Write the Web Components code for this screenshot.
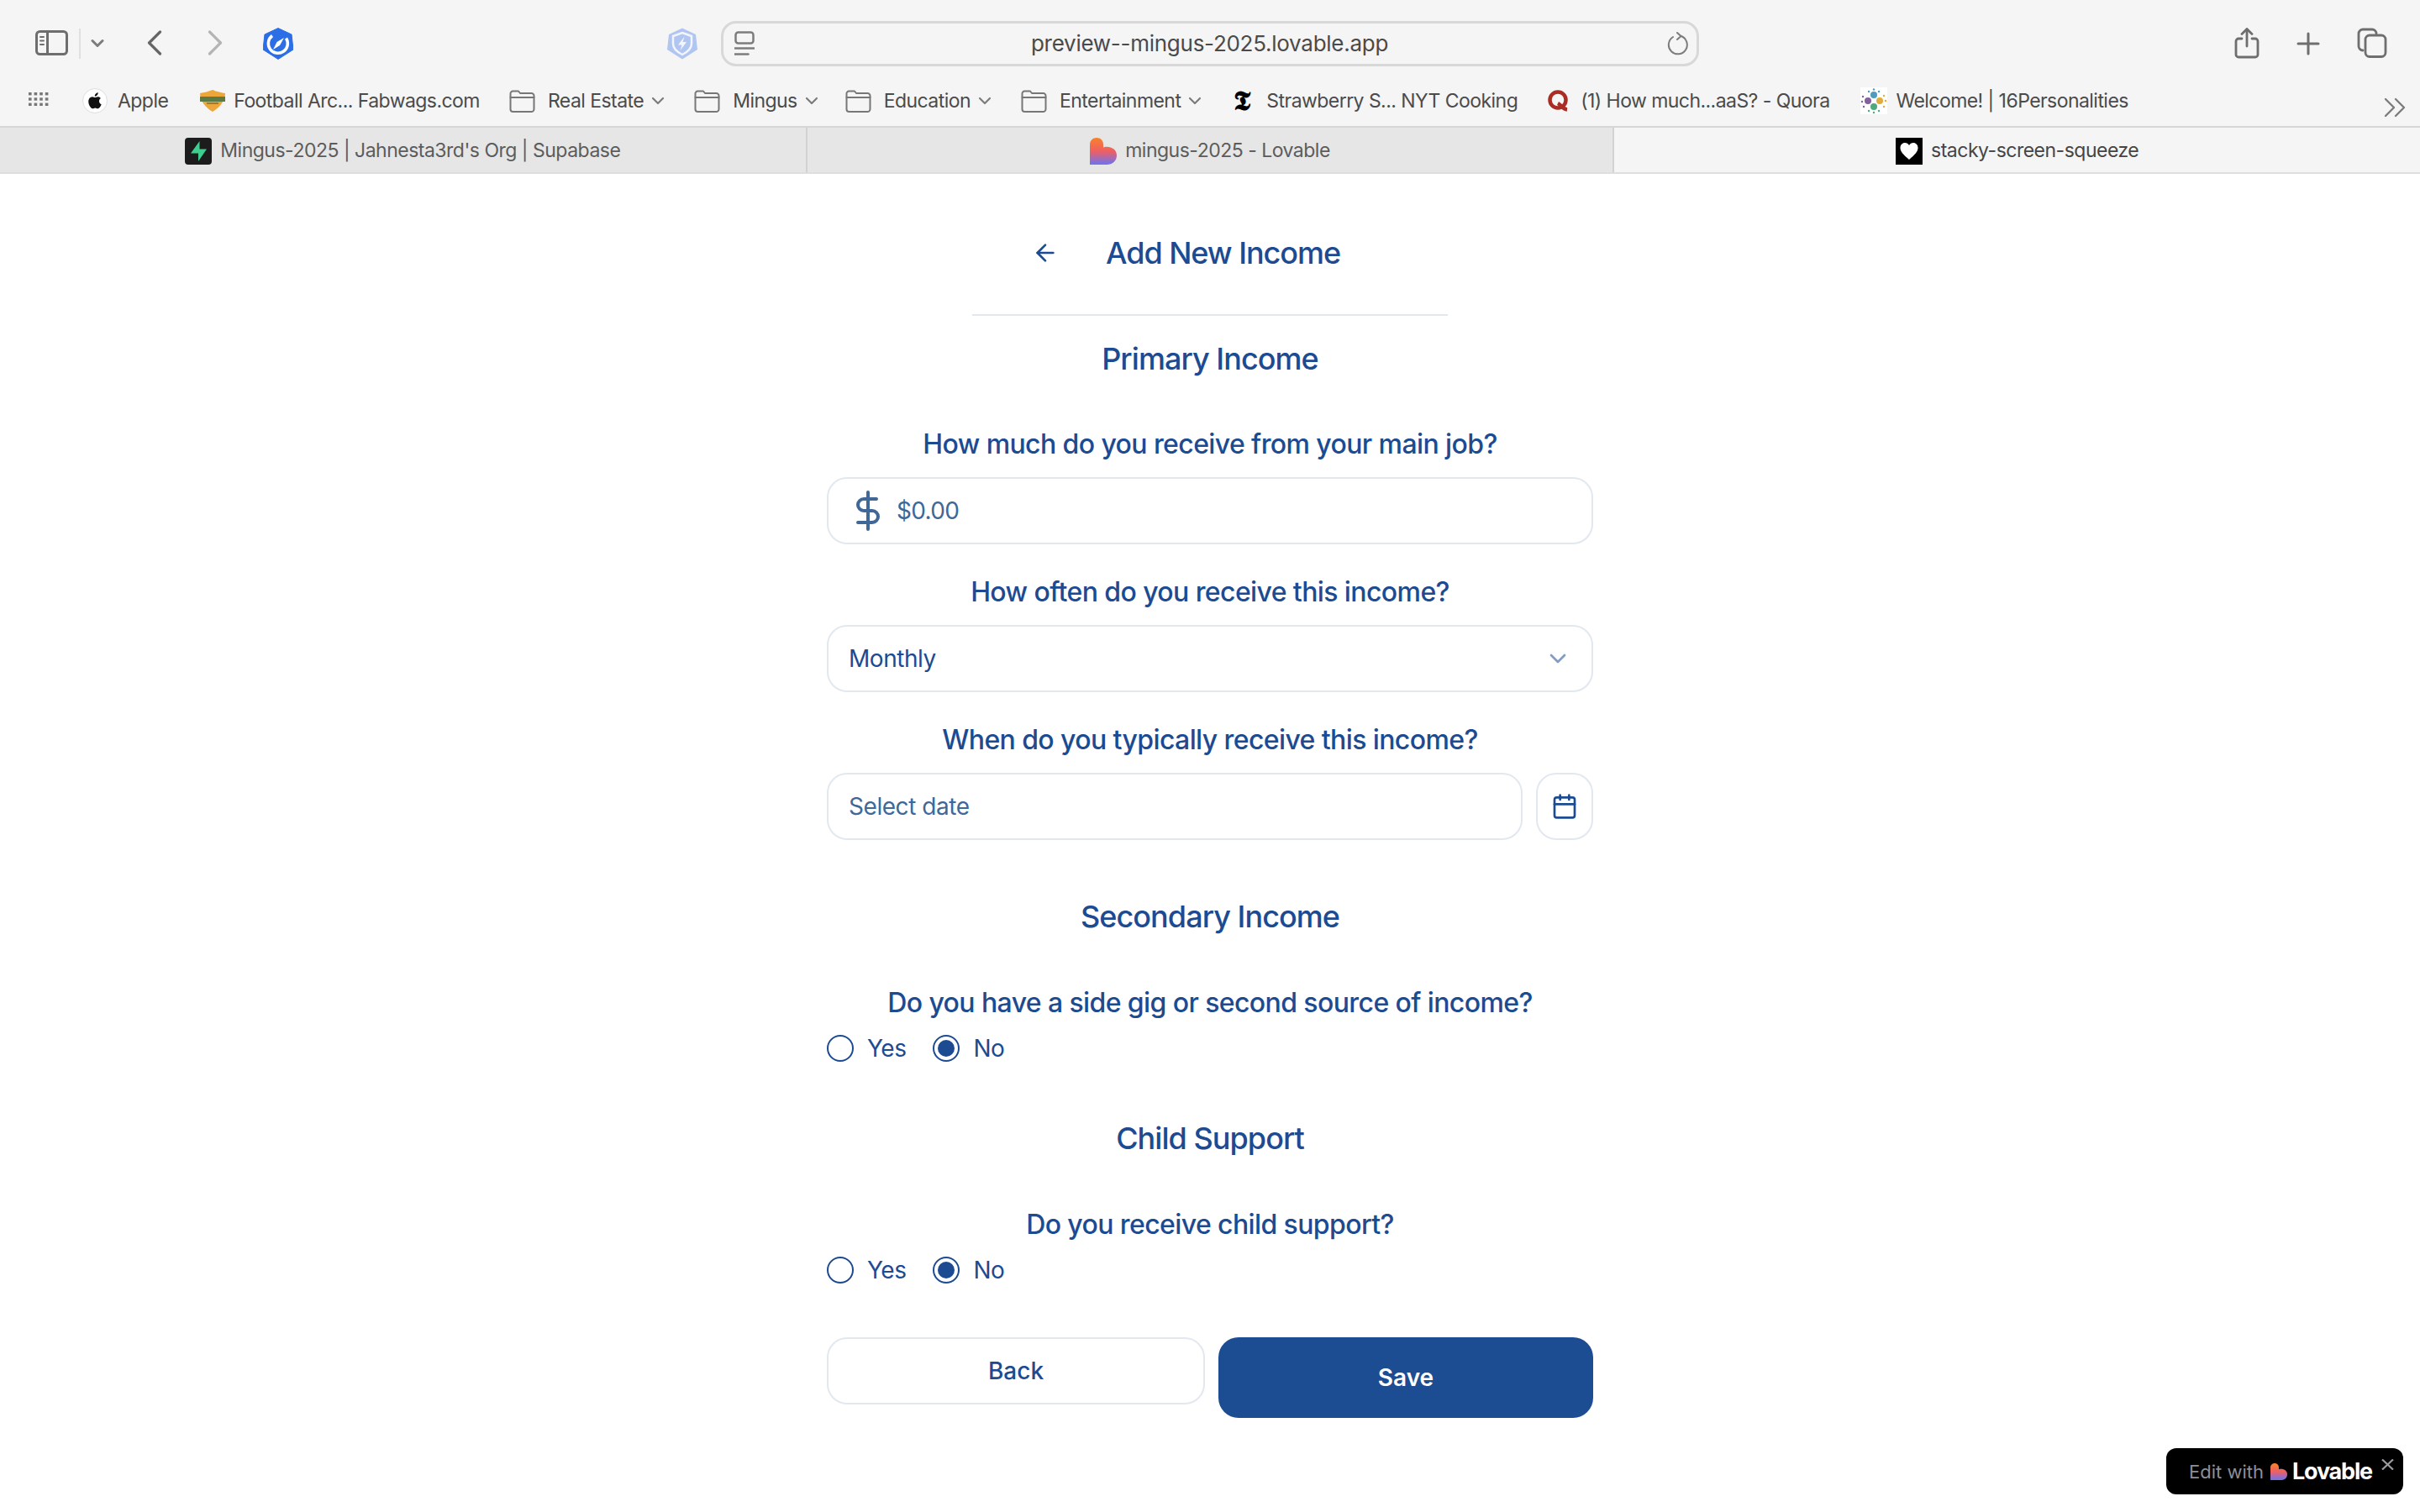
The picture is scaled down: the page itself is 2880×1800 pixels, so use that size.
<!DOCTYPE html>
<html lang="en"><head><meta charset="utf-8"><title>Add New Income</title>
<style>
html,body{margin:0;padding:0;background:#fff;height:1800px;overflow:hidden;font-family:Inter,"Liberation Sans",sans-serif}
</style></head><body>
<browser-chrome></browser-chrome>
<income-form></income-form>
<lovable-badge></lovable-badge>
<script>
const HEART=(id,w,h)=>`<svg width="${w}" height="${h}" viewBox="0 0 32 32"><defs><linearGradient id="${id}" x1="0" y1="0" x2="0" y2="1"><stop offset="0" stop-color="#f9822b"/><stop offset=".5" stop-color="#ee5f63"/><stop offset="1" stop-color="#6a73f5"/></linearGradient></defs><path d="M8 0C13 0 16 3.500 16 8V11.500C17 11 18.500 10.800 20 10.800C27 10.800 32 15 32 21C32 27.500 27 32 20 32H0V8C0 3.500 3.500 0 8 0Z" fill="url(#${id})"/></svg>`;
function def(name,html){
  customElements.define(name,class extends HTMLElement{
    constructor(){super();const r=this.attachShadow({mode:'open'});r.innerHTML=typeof html==='function'?html(this):html;}
  });
}
const ic='fill="none" stroke-linecap="round" stroke-linejoin="round"';
const HEX='M18 0.500L34 8L36 26L18 37.500L0 26L2 8Z';

def('browser-toolbar',`<style>
:host{display:flex;height:102px;background:#f5f5f5;align-items:flex-start;box-sizing:border-box}
svg{display:block;flex:none}
.url{width:1164px;height:54px;margin:25px 0 0 28px;box-sizing:border-box;border:3px solid #d8d8d8;border-radius:18px;display:flex;align-items:center;flex:none;padding:0 9px 0 13px}
.url span{flex:1;text-align:center;font:400 26px/1 Inter,"Liberation Sans",sans-serif;color:#4a4a4a;letter-spacing:-.27px;padding-right:3px}
</style>
<svg style="margin:36px 0 0 42px" width="39" height="30" viewBox="0 0 39 30" ${ic} stroke="#6e6e6e" stroke-width="3"><rect x="1.500" y="1.500" width="36" height="27" rx="4"/><path d="M14.500 2v26"/><path d="M6 8h4M6 12.500h4M6 17h4" stroke-width="2"/></svg>
<svg style="margin:34px 0 0 13px" width="3" height="36"><rect width="2" height="36" fill="#e0e0e0"/></svg>
<svg style="margin:46px 0 0 11px" width="16" height="12" viewBox="0 0 16 12" ${ic} stroke="#7c7c7c" stroke-width="3"><path d="M2 2.500l6 6 6-6"/></svg>
<svg style="margin:36px 0 0 51px" width="18" height="30" viewBox="0 0 18 30" ${ic} stroke="#666" stroke-width="3.200"><path d="M15.500 2L2.500 15l13 13"/></svg>
<svg style="margin:36px 0 0 54px" width="18" height="30" viewBox="0 0 18 30" ${ic} stroke="#b4b4b4" stroke-width="3.200"><path d="M2.500 2l13 13-13 13"/></svg>
<svg style="margin:33px 0 0 48px" width="36" height="38" viewBox="0 0 36 38"><path d="${HEX}" fill="#2b6ee6" stroke="#2b6ee6" stroke-linejoin="round"/><path d="M27.500 12.500A11.500 11.500 0 1 1 11 9.500" fill="none" stroke="#fff" stroke-width="3.500"/><path d="M25 12L20 21L12 26L16.500 17Z" fill="#fff"/></svg>
<svg style="margin:33px 0 0 445px" width="36" height="38" viewBox="0 0 36 38"><path d="${HEX}" fill="#b1c5f1"/><path d="M18 6L29 10V19C29 25 24 29 18 32C12 29 7 25 7 19V10Z" fill="none" stroke="#f2f5fc" stroke-width="2.500"/><path d="M20.500 10.500L13 20.500H17.500L15.500 27L23 17H18.500Z" fill="#f2f5fc"/></svg>
<div class="url">
<svg width="24" height="30" viewBox="0 0 24 30" ${ic} stroke="#7c7c7c" stroke-width="2.500"><rect x="1.500" y="1.500" width="21" height="13" rx="3"/><path d="M0.500 20.500h23"/><path d="M0.500 27.500h16" /></svg>
<span>preview--mingus-2025.lovable.app</span>
<svg width="26" height="28" viewBox="0 0 26 28" ${ic} stroke="#7c7c7c" stroke-width="2"><path d="M16 4.800A11 11 0 1 1 7 6"/><path d="M12 1l4.500 4-4.500 4"/></svg>
</div>
<svg style="margin:33px 0 0 637px" width="30" height="37" viewBox="0 0 30 37" ${ic} stroke="#6e6e6e" stroke-width="2.800"><path d="M9 13H5a3 3 0 0 0-3 3v16a3 3 0 0 0 3 3h20a3 3 0 0 0 3-3V16a3 3 0 0 0-3-3h-4"/><path d="M15 22V2"/><path d="M9 7.500L15 1.500l6 6"/></svg>
<svg style="margin:38px 0 0 44px" width="28" height="28" viewBox="0 0 28 28" ${ic} stroke="#6e6e6e" stroke-width="3"><path d="M14 2v24M2 14h24"/></svg>
<svg style="margin:33px 0 0 44px" width="36" height="36" viewBox="0 0 36 36" ${ic} stroke="#6e6e6e" stroke-width="2.800"><path d="M7 27a5 5 0 0 1-5-5V7a5 5 0 0 1 5-5h11a5 5 0 0 1 5 5"/><rect x="10" y="9" width="24" height="25.500" rx="5"/></svg>
`);

def('book-mark',h=>`<style>
:host{display:inline-flex;align-items:center;height:30px;flex:none;font:400 23px/30px Inter,"Liberation Sans",sans-serif;color:#4b4b4b;letter-spacing:-.55px;white-space:nowrap;margin-right:35px}
.s{display:flex;width:${h.getAttribute('iw')||30}px;justify-content:center;margin-right:${h.getAttribute('g')||12}px}
.c{margin-left:9px}
</style><span class="s"><slot name="icon"></slot></span><slot></slot>${h.hasAttribute('menu')?`<svg class="c" width="16" height="10" viewBox="0 0 16 10" ${ic} stroke="#7c7c7c" stroke-width="2.200"><path d="M2 2l6 6 6-6"/></svg>`:''}`);

const folder=`<svg slot="icon" width="31" height="27" viewBox="0 0 31 27" ${ic} stroke="#777" stroke-width="2"><path d="M1.500 5V23a3 3 0 0 0 3 3h22a3 3 0 0 0 3-3V7a3 3 0 0 0-3-3H13L11 1.500H4.500a3 3 0 0 0-3 3.500Z"/><path d="M1.500 9h28"/></svg>`;

def('bookmark-bar',`<style>
:host{display:flex;height:48px;background:#f5f5f5;align-items:flex-start;position:relative;box-sizing:border-box;padding-left:34px}
.grid{flex:none;margin:8px 40px 0 0}
.more{margin:14px 0 0 auto;margin-right:17px;flex:none}
.row{display:flex;align-items:center;height:30px;margin-top:3px}
</style>
<svg class="grid" width="24" height="16" viewBox="0 0 24 16" fill="#777">
${[0,1,2].map(r=>[0,1,2,3].map(c=>`<rect x="${c*6.600}" y="${r*6.300}" width="3.600" height="3.400"/>`).join('')).join('')}</svg>
<div class="row">
<book-mark g="12" style="margin-right:38px"><svg slot="icon" width="30" height="30" viewBox="0 0 30 30"><circle cx="15" cy="15" r="14.500" fill="#fff" stroke="#ddd"/><g transform="translate(15 15) scale(1.150) translate(-15 -15.500)"><path d="M19.300 15.800c0-2 1.600-3 1.700-3-1-1.300-2.400-1.500-2.900-1.500-1.200-.1-2.400.7-3 .7s-1.600-.7-2.700-.7c-1.400 0-2.700.8-3.400 2-1.500 2.500-.4 6.200 1 8.200.7 1 1.500 2.100 2.600 2 1 0 1.400-.7 2.700-.7s1.600.7 2.700.7 1.800-1 2.500-2c.8-1.100 1.100-2.200 1.100-2.300-.1 0-2.300-.8-2.300-3.400zM17.300 9.700c.6-.7 1-1.700.9-2.700-.9 0-1.900.6-2.500 1.300-.5.600-1 1.600-.9 2.600 1 .1 2-.5 2.500-1.200z" fill="#111"/></g></svg>Apple</book-mark>
<book-mark g="10"><svg slot="icon" width="30" height="26" viewBox="0 0 30 26"><path d="M0 4C5 3 10 2 15 0C20 2 25 3 30 4C30 12 24 21 15 26C6 21 0 12 0 4Z" fill="#eda63a"/><rect x="0" y="8" width="30" height="6" fill="#5d7a44"/><rect x="8" y="15" width="14" height="2" fill="#9b7a34"/></svg>Football Arc... Fabwags.com</book-mark>
<book-mark menu g="15" iw="31">${folder}Real Estate</book-mark>
<book-mark menu g="15" iw="31" style="margin-right:32px">${folder}Mingus</book-mark>
<book-mark menu g="15" iw="31">${folder}Education</book-mark>
<book-mark menu g="15" iw="31" style="margin-right:36px">${folder}Entertainment</book-mark>
<book-mark g="19" iw="22" style="margin-right:36px"><span slot="icon" style="font:700 33px/30px 'DejaVu Serif',serif;color:#000">𝕿</span>Strawberry S... NYT Cooking</book-mark>
<book-mark g="15" iw="24" style="margin-right:36px"><svg slot="icon" width="24" height="26" viewBox="0 0 24 26" fill="none" stroke="#a92d23" stroke-width="4.500"><ellipse cx="12" cy="12" rx="9.500" ry="9.500"/><path d="M12 16C16 18 18 23 23 23.500"/></svg>(1) How much...aaS? - Quora</book-mark>
<book-mark g="11" iw="32"><svg slot="icon" width="32" height="32" viewBox="0 0 32 32"><rect width="32" height="32" fill="#fff"/><circle cx="16" cy="9" r="4" fill="#4f9bbf"/><circle cx="9" cy="16" r="4" fill="#85609f"/><circle cx="23" cy="16" r="4" fill="#e0ad3c"/><circle cx="16" cy="23" r="4" fill="#4fa97c"/><g fill="#4f9bbf"><circle cx="10" cy="5" r="1.200"/><circle cx="16" cy="2.500" r="1.200"/><circle cx="22" cy="5" r="1.200"/></g><g fill="#85609f"><circle cx="3" cy="11" r="1.200"/><circle cx="2" cy="17" r="1.200"/><circle cx="4" cy="23" r="1.200"/></g><g fill="#e0ad3c"><circle cx="28" cy="10" r="1.200"/><circle cx="30" cy="16" r="1.200"/><circle cx="28" cy="23" r="1.200"/></g><g fill="#4fa97c"><circle cx="10" cy="28" r="1.200"/><circle cx="16" cy="30" r="1.200"/><circle cx="22" cy="28" r="1.200"/></g></svg>Welcome! | 16Personalities</book-mark>
</div>
<svg class="more" width="26" height="24" viewBox="0 0 26 24" ${ic} stroke="#7c7c7c" stroke-width="2.400"><path d="M2 2l10 10L2 22M14 2l10 10-10 10"/></svg>
`);

def('tab-item',h=>`<style>
:host{flex:1;display:flex;align-items:center;justify-content:center;gap:10px;padding-top:2px;background:${h.hasAttribute('active')?'#f5f5f5':'#e6e6e6'};border-right:${h.hasAttribute('last')?'0':'2px solid #d2d2d2'};font:400 23px/1 Inter,"Liberation Sans",sans-serif;color:${h.hasAttribute('active')?'#454545':'#5c5c5c'};letter-spacing:-.5px;white-space:nowrap;box-sizing:border-box;min-width:0}
</style><slot name="icon"></slot><slot></slot>`);

def('tab-strip',`<style>:host{display:flex;height:57px;border-top:2px solid #d6d6d6;border-bottom:2px solid #dedede;box-sizing:border-box}</style>
<tab-item><svg slot="icon" width="32" height="32" viewBox="0 0 32 32"><rect width="32" height="32" rx="4" fill="#1c1c1c"/><path d="M17.500 4L7 18.500H16V28L26 13.500H17.500Z" fill="#3ecf8e"/></svg>Mingus-2025 | Jahnesta3rd's Org | Supabase</tab-item>
<tab-item><span slot="icon" style="display:flex">${HEART('h1',32,32)}</span>mingus-2025 - Lovable</tab-item>
<tab-item active last><svg slot="icon" width="32" height="32" viewBox="0 0 32 32"><rect width="32" height="32" fill="#000"/><path d="M16 26C9 20 5.500 16.500 5.500 12C5.500 8.500 8 6 11 6C13 6 15 7 16 9C17 7 19 6 21 6C24 6 26.500 8.500 26.500 12C26.500 16.500 23 20 16 26Z" fill="#fff"/></svg>stacky-screen-squeeze</tab-item>`);

def('browser-chrome',`<style>:host{display:block}</style><browser-toolbar></browser-toolbar><bookmark-bar></bookmark-bar><tab-strip></tab-strip>`);

const fieldCss=`:host{display:flex;align-items:center;height:80px;box-sizing:border-box;border:2px solid #e2e8f0;border-radius:24px;background:#fff;font:400 28px/1 Inter,"Liberation Sans",sans-serif;letter-spacing:-.45px;color:var(--blue)}`;

def('section-title',`<style>:host{display:block;text-align:center;font:500 36px/56px Inter,"Liberation Sans",sans-serif;letter-spacing:-.95px;color:var(--blue)}</style><slot></slot>`);
def('field-label',`<style>:host{display:block;text-align:center;font:500 32px/48px Inter,"Liberation Sans",sans-serif;letter-spacing:-.6px;color:var(--blue);padding-top:1px;margin-bottom:15px}</style><slot></slot>`);

def('money-input',`<style>${fieldCss}:host{padding-left:23px;color:#3f6798;letter-spacing:-.7px}svg{margin-right:10px}</style>
<svg width="48" height="48" viewBox="0 0 24 24" ${ic} stroke="#3f6798" stroke-width="2"><line x1="12" y1="1" x2="12" y2="23"/><path d="M17 5H9.500a3.500 3.500 0 0 0 0 7h5a3.500 3.500 0 0 1 0 7H6"/></svg><slot></slot>`);

def('select-input',`<style>${fieldCss}:host{padding:0 24px;justify-content:space-between}</style><slot></slot>
<svg width="32" height="32" viewBox="0 0 24 24" ${ic} stroke="#1c4b92" stroke-opacity=".55" stroke-width="2"><path d="m6 9 6 6 6-6"/></svg>`);

def('date-input',`<style>:host{display:flex;gap:16px}.f{${fieldCss.slice(fieldCss.indexOf('{')+1,-1)};flex:1;padding:0 24px;color:#3f6798}.b{${fieldCss.slice(fieldCss.indexOf('{')+1,-1)};width:68px;justify-content:center;flex:none}</style>
<div class="f"><slot></slot></div><div class="b"><svg width="32" height="32" viewBox="0 0 24 24" ${ic} stroke="#1c4b92" stroke-width="2"><path d="M8 2v4M16 2v4"/><rect x="3" y="4" width="18" height="18" rx="2"/><path d="M3 10h18"/></svg></div>`);

def('radio-option',h=>`<style>:host{display:inline-flex;align-items:center;gap:16px;font:400 28px/48px Inter,"Liberation Sans",sans-serif;letter-spacing:-.5px;color:var(--blue)}
.r{width:32px;height:32px;box-sizing:border-box;border:2px solid var(--blue);border-radius:50%;display:flex;align-items:center;justify-content:center}
.d{width:20px;height:20px;border-radius:50%;background:var(--blue)}</style>
<span class="r">${h.hasAttribute('checked')?'<span class="d"></span>':''}</span><slot></slot>`);

def('radio-row',`<style>:host{display:flex;gap:32px;height:48px;margin-top:-9px}</style><slot></slot>`);

def('form-button',h=>{const p=h.hasAttribute('primary');return `<style>:host{flex:1;display:flex;align-items:center;justify-content:center;box-sizing:border-box;height:${p?96:80}px;border-radius:24px;font:${p?600:500} 28px/1 Inter,"Liberation Sans",sans-serif;background:${p?'#1c4c92':'#fff'};color:${p?'#fff':'var(--blue)'};border:${p?'0':'2px solid #e2e8f0'}}</style><slot></slot>`});

def('income-form',`<style>
:host{display:block;--blue:#1c4b92;width:912px;margin:0 auto}
.head{width:566px;margin:0 auto;box-sizing:border-box;padding:62px 0 41px 55px;border-bottom:2px solid #e2e8f0;display:flex;align-items:center;gap:40px;height:169px}
.arrow{width:64px;height:64px;display:flex;align-items:center;justify-content:center;flex:none}
h1{margin:0;font:500 36px/64px Inter,"Liberation Sans",sans-serif;letter-spacing:-1.05px;color:var(--blue)}
.sec{margin-top:63px}
.first{margin-top:23px}
field-label{margin-top:49px}
field-label.after{margin-top:50px}
field-label.next{margin-top:32px}
.btns{display:flex;gap:16px;align-items:flex-start;margin-top:56px}
.child{margin-top:55px}
</style>
<div class="head"><div class="arrow"><svg width="32" height="32" viewBox="0 0 24 24" ${ic} stroke="#1c4b92" stroke-width="2"><path d="M12 19l-7-7 7-7"/><path d="M19 12H5"/></svg></div><h1>Add New Income</h1></div>
<section-title class="first">Primary Income</section-title>
<field-label>How much do you receive from your main job?</field-label>
<money-input>$0.00</money-input>
<field-label class="next">How often do you receive this income?</field-label>
<select-input>Monthly</select-input>
<field-label class="next">When do you typically receive this income?</field-label>
<date-input>Select date</date-input>
<section-title class="sec">Secondary Income</section-title>
<field-label class="after">Do you have a side gig or second source of income?</field-label>
<radio-row><radio-option>Yes</radio-option><radio-option checked>No</radio-option></radio-row>
<section-title class="child">Child Support</section-title>
<field-label class="after">Do you receive child support?</field-label>
<radio-row><radio-option>Yes</radio-option><radio-option checked>No</radio-option></radio-row>
<div class="btns"><form-button>Back</form-button><form-button primary>Save</form-button></div>
`);

def('lovable-badge',`<style>
:host{position:fixed;right:20px;top:1724px;width:282px;height:55px;background:#000;border-radius:12px;display:flex;align-items:center;box-sizing:border-box;padding-left:27px;font:400 22px/1 Inter,"Liberation Sans",sans-serif;color:#8e8e98}
.h{display:flex;margin:0 6px 0 8px}
b{font-weight:700;font-size:27px;letter-spacing:-1.200px;color:#fff}
.x{position:absolute;right:11px;top:13px}
</style>Edit with<span class="h">${HEART('h2',20,20)}</span><b>Lovable</b>
<svg class="x" width="15" height="13" viewBox="0 0 15 13" stroke="#9a9aa2" stroke-width="2.200" fill="none"><path d="M1 0.500L14 12.500M14 0.500L1 12.500"/></svg>`);
</script>
</body></html>
